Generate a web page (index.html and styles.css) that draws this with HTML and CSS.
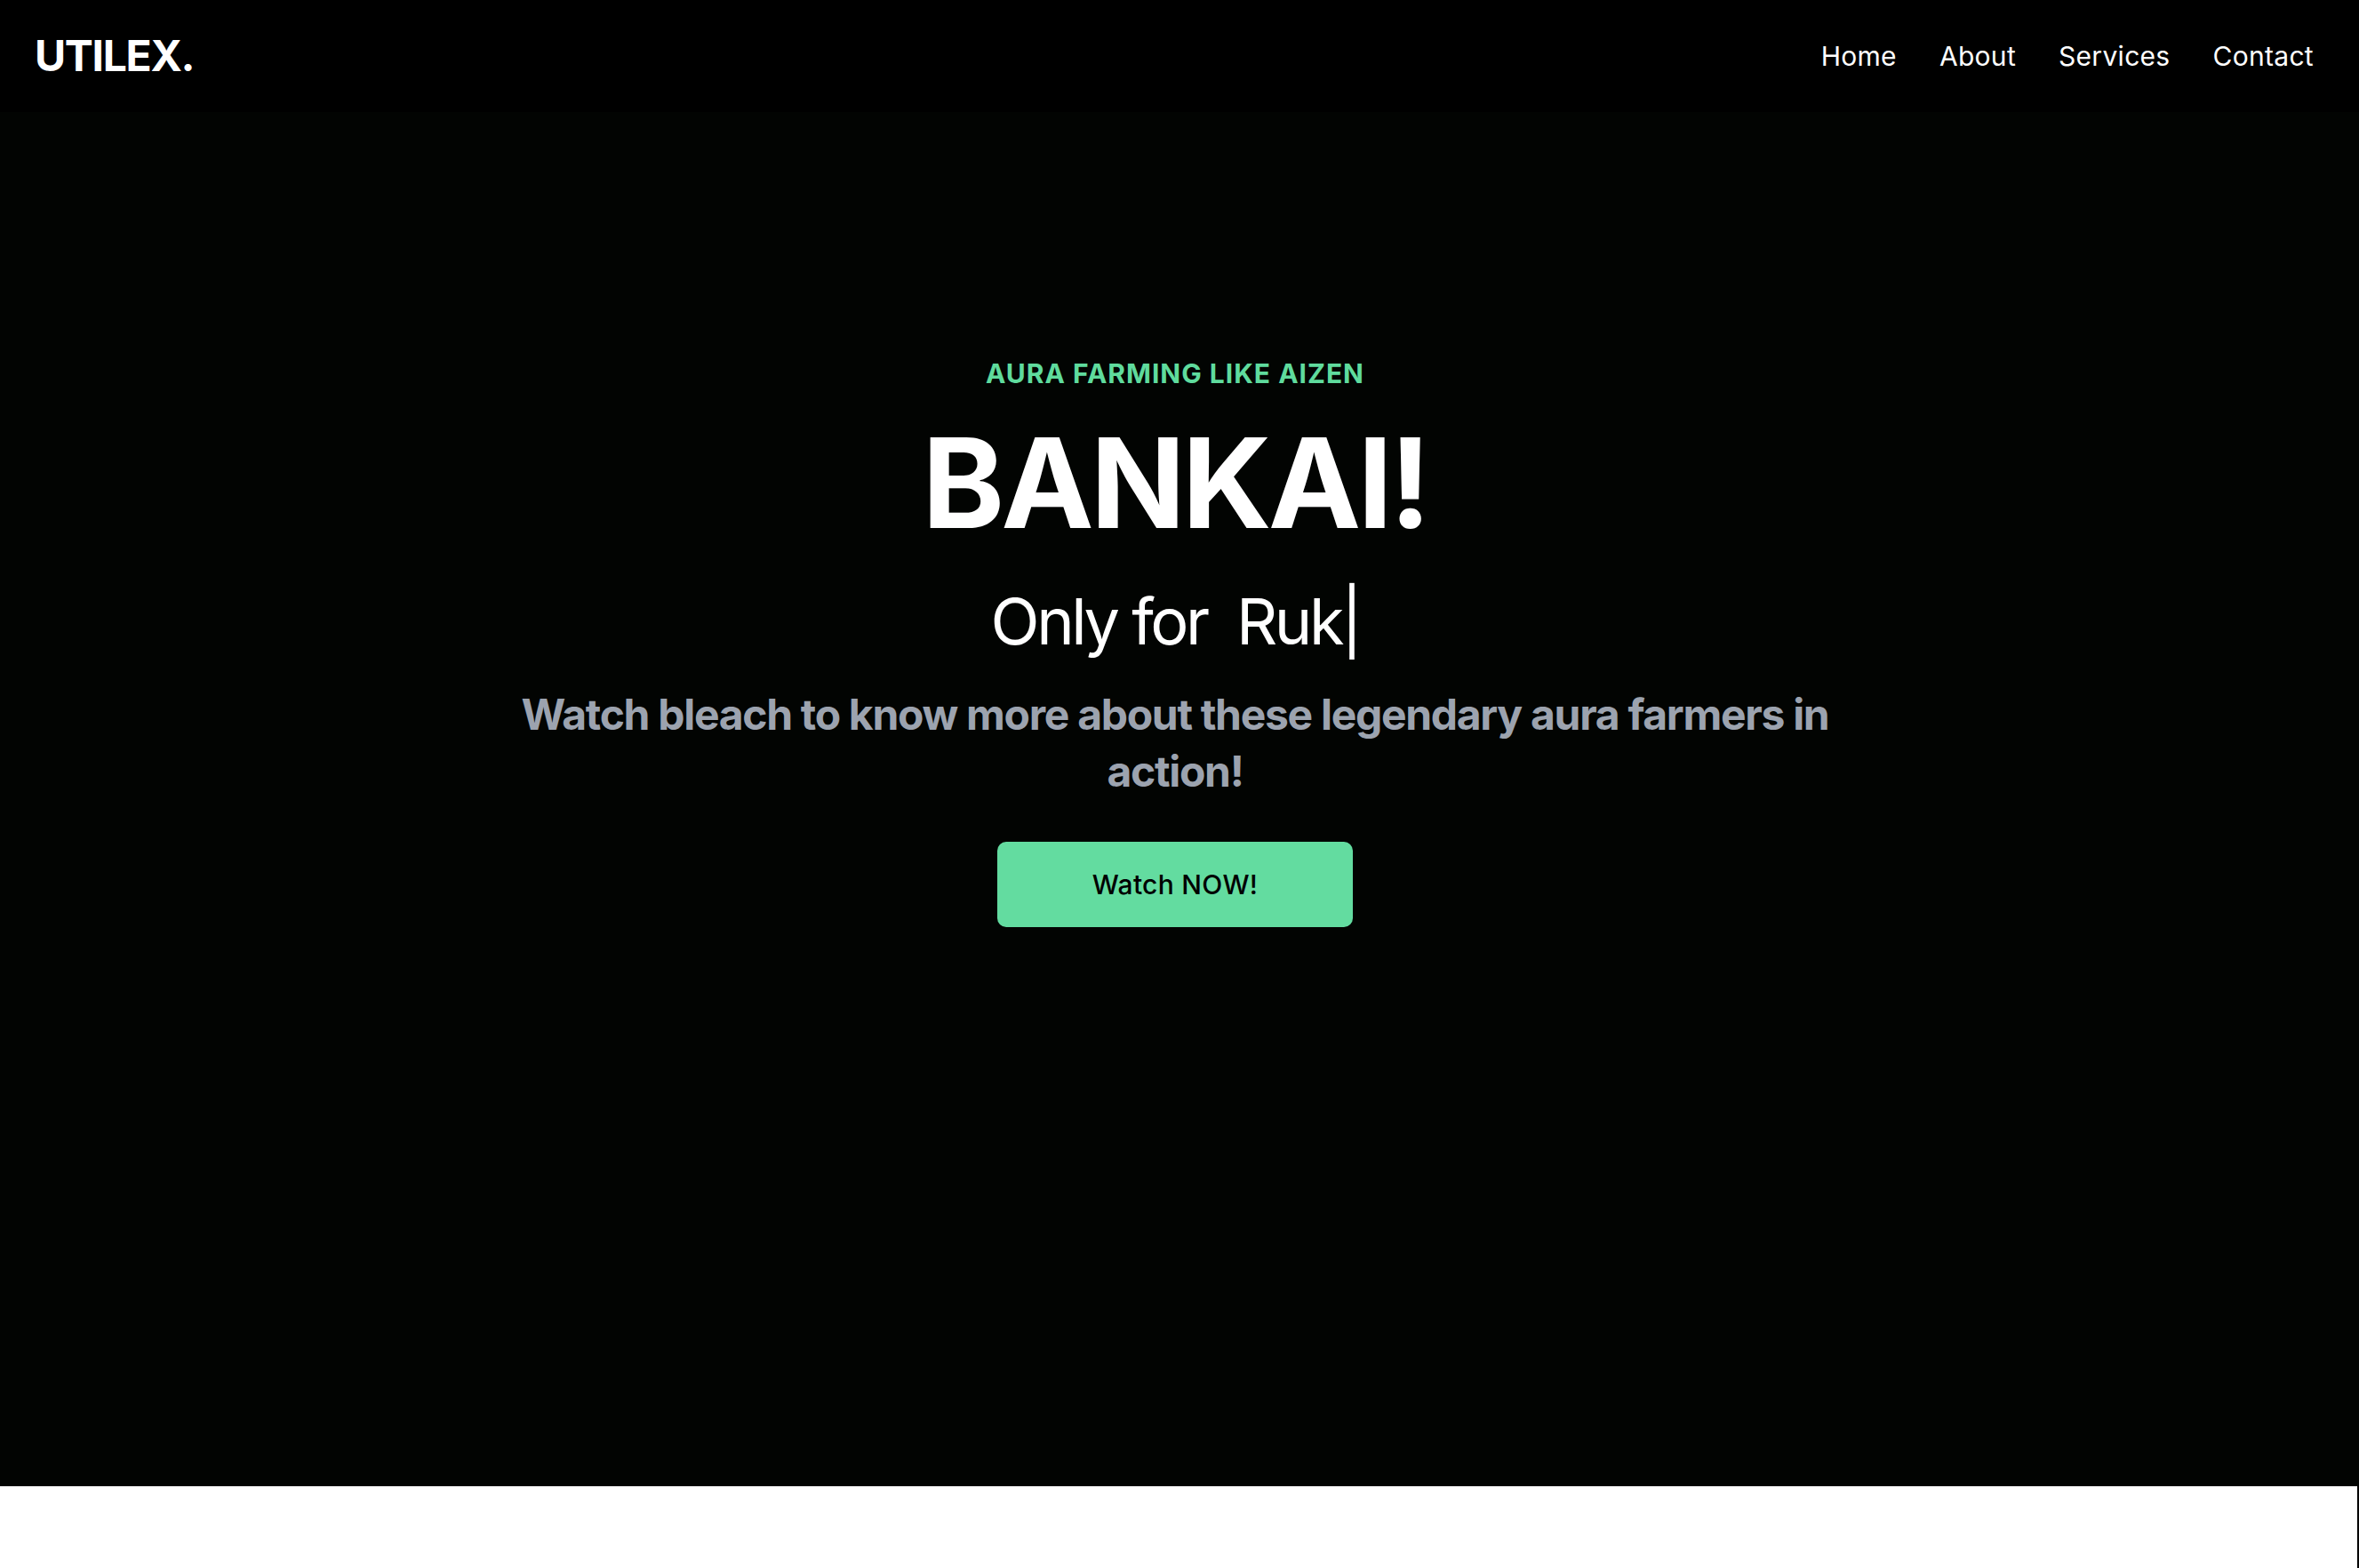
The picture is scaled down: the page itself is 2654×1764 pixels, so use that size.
FILE: index.html
```html
<!DOCTYPE html>
<html lang="en">
<head>
<meta charset="utf-8">
<title>UTILEX.</title>
<link rel="stylesheet" href="styles.css">
</head>
<body>
  <header class="nav">
    <div class="logo">UTILEX.</div>
    <nav class="links">
      <a href="#">Home</a>
      <a href="#">About</a>
      <a href="#">Services</a>
      <a href="#">Contact</a>
    </nav>
  </header>
  <section class="hero">
    <div class="hero-inner">
      <p class="eyebrow">AURA FARMING LIKE AIZEN</p>
      <h1 class="title">BANKAI!</h1>
      <p class="typed">Only for&nbsp; Ruk<span class="cursor">|</span></p>
      <p class="desc">Watch bleach to know more about these legendary aura farmers in action!</p>
      <a class="cta" href="#">Watch NOW!</a>
    </div>
  </section>
  <section class="after"></section>
</body>
</html>
```
FILE: styles.css
```css
html, body {
  margin: 0;
  padding: 0;
}
body {
  background: #000;
  font-family: Inter, "Noto Sans", "Liberation Sans", sans-serif;
  color: #fff;
}
.nav {
  height: 126px;
  display: flex;
  align-items: center;
  justify-content: space-between;
  padding: 0 51px 0 39px;
  background: #000;
}
.logo {
  font-size: 48px;
  font-weight: 700;
  letter-spacing: -1.3px;
  line-height: 1;
}
.links {
  display: flex;
  gap: 48px;
}
.links a {
  color: #fff;
  text-decoration: none;
  font-size: 30px;
  line-height: 1;
  letter-spacing: 0.3px;
}
.hero {
  background: #020402;
  height: 1546px;
  padding-top: 276px;
  box-sizing: border-box;
}
.hero-inner {
  display: flex;
  flex-direction: column;
  align-items: center;
  text-align: center;
  padding-right: 10px;
}
.eyebrow {
  margin: 0;
  font-size: 30px;
  line-height: 36px;
  font-weight: 700;
  color: #5fdb9d;
  letter-spacing: 1px;
}
.title {
  margin: 35px 0 0;
  font-size: 140px;
  line-height: 140px;
  font-weight: 700;
  letter-spacing: -3.8px;
}
.typed {
  margin: 43px 0 0;
  font-size: 72px;
  line-height: 86px;
  font-weight: 400;
  letter-spacing: -3.5px;
}
.cursor {
  font-weight: 400;
}
.desc {
  margin: 30px 0 0;
  max-width: 1500px;
  font-size: 48px;
  line-height: 64px;
  font-weight: 700;
  color: #9ca3af;
  letter-spacing: -1.3px;
}
.cta {
  margin-top: 47px;
  width: 400px;
  height: 96px;
  display: flex;
  align-items: center;
  justify-content: center;
  background: #63dca0;
  color: #000;
  border-radius: 10px;
  text-decoration: none;
  font-size: 30px;
  font-weight: 500;
  letter-spacing: 0.3px;
}
.after {
  background: #fff;
  height: 400px;
  margin-right: 2px;
}
```
